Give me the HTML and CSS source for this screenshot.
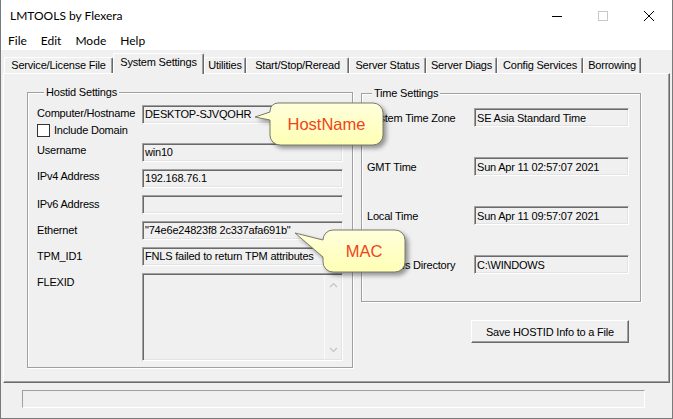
FILE: index.html
```html
<!DOCTYPE html>
<html lang="en">
<head>
<meta charset="utf-8">
<title>LMTOOLS by Flexera</title>
<link rel="stylesheet" href="styles.css">
</head>
<body>
<div class="window">
  <div class="titlebar">
    <span class="title">LMTOOLS by Flexera</span>
    <div class="winbtn"><svg width="10" height="10" viewBox="0 0 10 10"><path d="M0 5.5H10" stroke="#000" stroke-width="1"/></svg></div>
    <div class="winbtn"><svg width="10" height="10" viewBox="0 0 10 10"><rect x="0.5" y="0.5" width="9" height="9" fill="none" stroke="#c8c8c8" stroke-width="1"/></svg></div>
    <div class="winbtn"><svg width="10" height="10" viewBox="0 0 10 10"><path d="M0 0L10 10M10 0L0 10" stroke="#000" stroke-width="1"/></svg></div>
  </div>
  <div class="menubar">
    <span class="menu-item">File</span>
    <span class="menu-item">Edit</span>
    <span class="menu-item">Mode</span>
    <span class="menu-item">Help</span>
  </div>
  <div class="client">
    <div class="tabs">
      <div class="tab tab--svc">Service/License File</div>
      <div class="tab tab--sys tab--active">System Settings</div>
      <div class="tab tab--util">Utilities</div>
      <div class="tab tab--ssr">Start/Stop/Reread</div>
      <div class="tab tab--status">Server Status</div>
      <div class="tab tab--diag">Server Diags</div>
      <div class="tab tab--cfg">Config Services</div>
      <div class="tab tab--borrow">Borrowing</div>
    </div>
    <div class="panel">
      <div class="group group--host">
        <span class="group-title">Hostid Settings</span>
        <div class="hrow hrow--first">
          <span class="hlabel hlabel--host">Computer/Hostname</span>
          <div class="field">DESKTOP-SJVQOHR</div>
        </div>
        <div class="check">
          <span class="checkbox"></span>
          <span>Include Domain</span>
        </div>
        <div class="hrow hrow--user">
          <span class="hlabel hlabel--hi">Username</span>
          <div class="field">win10</div>
        </div>
        <div class="hrow">
          <span class="hlabel hlabel--hi">IPv4 Address</span>
          <div class="field">192.168.76.1</div>
        </div>
        <div class="hrow">
          <span class="hlabel">IPv6 Address</span>
          <div class="field"></div>
        </div>
        <div class="hrow">
          <span class="hlabel">Ethernet</span>
          <div class="field">"74e6e24823f8 2c337afa691b"</div>
        </div>
        <div class="hrow">
          <span class="hlabel">TPM_ID1</span>
          <div class="field">FNLS failed to return TPM attributes</div>
        </div>
        <div class="hrow">
          <span class="hlabel">FLEXID</span>
          <div class="field field--multi">
            <div class="vscroll">
              <svg width="9" height="6" viewBox="0 0 9 6"><path d="M1 5L4.5 1.5L8 5" fill="none" stroke="#c4c4c4" stroke-width="1.2"/></svg>
              <svg width="9" height="6" viewBox="0 0 9 6"><path d="M1 1L4.5 4.5L8 1" fill="none" stroke="#c4c4c4" stroke-width="1.2"/></svg>
            </div>
          </div>
        </div>
      </div>
      <div class="rightcol">
        <div class="group group--time">
          <span class="group-title group-title--time">Time Settings</span>
          <div class="trow trow--first">
            <span class="tlabel">System Time Zone</span>
            <div class="field field--time">SE Asia Standard Time</div>
          </div>
          <div class="trow">
            <span class="tlabel">GMT Time</span>
            <div class="field field--time">Sun Apr 11 02:57:07 2021</div>
          </div>
          <div class="trow">
            <span class="tlabel">Local Time</span>
            <div class="field field--time">Sun Apr 11 09:57:07 2021</div>
          </div>
          <div class="trow">
            <span class="tlabel">Windows Directory</span>
            <div class="field field--time">C:\WINDOWS</div>
          </div>
        </div>
        <button class="btn" type="button">Save HOSTID Info to a File</button>
      </div>
    </div>
    <div class="statusbar"></div>
  </div>

  <div class="callout callout--host">
    <svg class="callout-shape" width="140" height="52" viewBox="0 0 140 52">
      <defs>
        <linearGradient id="cg1" x1="0" y1="0" x2="0" y2="1">
          <stop offset="0" stop-color="#ffffdc"/>
          <stop offset="1" stop-color="#ffffb4"/>
        </linearGradient>
      </defs>
      <path d="M28,5 H123 A10,10 0 0 1 133,15 V37 A10,10 0 0 1 123,47 H30 A10,10 0 0 1 20,37 V22 L5,19 L20,14 V13 A8,8 0 0 1 28,5 Z" fill="url(#cg1)" stroke="#7a7a6a" stroke-width="1"/>
    </svg>
    <span class="callout-text callout-text--host">HostName</span>
  </div>

  <div class="callout callout--mac">
    <svg class="callout-shape" width="122" height="52" viewBox="0 0 122 52">
      <defs>
        <linearGradient id="cg2" x1="0" y1="0" x2="0" y2="1">
          <stop offset="0" stop-color="#ffffdc"/>
          <stop offset="1" stop-color="#ffffb4"/>
        </linearGradient>
      </defs>
      <path d="M43,4 H105 A10,10 0 0 1 115,14 V36 A10,10 0 0 1 105,46 H43 A10,10 0 0 1 33,36 V31 L5,7 L33,14 A10,10 0 0 1 43,4 Z" fill="url(#cg2)" stroke="#7a7a6a" stroke-width="1"/>
    </svg>
    <span class="callout-text callout-text--mac">MAC</span>
  </div>
</div>
</body>
</html>
```
FILE: styles.css
```css
* { box-sizing: border-box; }
html, body { margin: 0; padding: 0; background: #fff; }
body {
  width: 673px;
  height: 419px;
  overflow: hidden;
  font-family: "Liberation Sans", Arial, sans-serif;
  font-size: 11px;
  letter-spacing: -0.2px;
  color: #000;
}

.window {
  position: relative;
  width: 673px;
  height: 419px;
  border: 1px solid #7a7a7a;
  border-top: 0;
  display: flex;
  flex-direction: column;
  background: #fff;
}

/* title bar */
.titlebar {
  height: 31px;
  display: flex;
  align-items: center;
  font-family: "Segoe UI", Lato, "Liberation Sans", sans-serif;
  font-size: 12px;
  letter-spacing: 0;
}
.title { flex: 1; padding-left: 9px; }
.winbtn {
  width: 46px;
  height: 31px;
  display: flex;
  align-items: center;
  justify-content: center;
}
.winbtn svg { display: block; }

/* menu */
.menubar {
  height: 19px;
  display: flex;
  align-items: center;
  padding-left: 0;
  font-family: "Segoe UI", Lato, "Liberation Sans", sans-serif;
  font-size: 12px;
  letter-spacing: 0;
}
.menu-item { padding: 0 7px; }

/* client */
.client {
  flex: 1;
  background: #f0f0f0;
  padding: 3px 2px 0 2px;
  display: flex;
  flex-direction: column;
}

.tabs {
  display: flex;
  align-items: flex-end;
  height: 20px;
  padding-left: 1px;
}
.tab {
  height: 16px;
  border-top: 1px solid #fff;
  border-left: 1px solid #fff;
  border-right: 1px solid #696969;
  box-shadow: inset -1px 0 #a0a0a0;
  border-radius: 2px 2px 0 0;
  text-align: center;
  line-height: 14px;
  white-space: nowrap;
  flex: none;
}
.tab--active {
  height: 21px;
  margin-bottom: -1px;
  position: relative;
  z-index: 1;
  background: #f0f0f0;
  line-height: 17px;
}
.tab--svc { width: 109px; }
.tab--sys { width: 91px; }
.tab--util { width: 42px; }
.tab--ssr { width: 103px; }
.tab--status { width: 77px; }
.tab--diag { width: 71px; }
.tab--cfg { width: 86px; }
.tab--borrow { width: 58px; }

.panel {
  height: 310px;
  border: 1px solid;
  border-color: #fff #696969 #696969 #fff;
  box-shadow: inset -1px -1px #a0a0a0;
  display: flex;
  align-items: flex-start;
  gap: 8px;
  padding: 18px 0 0 23px;
}

/* group boxes */
.group {
  border: 1px solid #a0a0a0;
  box-shadow: inset 1px 1px #fff, 1px 1px #fff;
  display: flex;
  flex-direction: column;
  flex: none;
}
.group-title {
  align-self: flex-start;
  background: #f0f0f0;
  margin: -7px 0 0 7px;
  padding: 0 2px;
  line-height: 13px;
}
.group-title--time { margin-left: 5px; }

.group--host {
  width: 326px;
  height: 276px;
  padding: 0 9px;
}
.hrow {
  display: flex;
  margin-top: 7px;
}
.hrow--first { margin-top: 6px; }
.hrow--user { margin-top: 6px; }
.hlabel {
  width: 105px;
  flex: none;
  padding-top: 3px;
  line-height: 13px;
  white-space: nowrap;
}
.hlabel--host { padding-top: 2px; }
.hlabel--hi { padding-top: 1px; }

.field {
  width: 201px;
  height: 19px;
  flex: none;
  border: 1px solid;
  border-color: #a0a0a0 #fff #fff #a0a0a0;
  box-shadow: inset 1px 1px #696969, inset -1px -1px #e3e3e3;
  padding: 2px 0 0 2px;
  line-height: 13px;
  white-space: nowrap;
  overflow: hidden;
  background: #f0f0f0;
}
.field--multi {
  height: 88px;
  padding: 0;
  display: flex;
  justify-content: flex-end;
}
.vscroll {
  width: 17px;
  margin: 1px 1px 1px 0;
  border-left: 1px solid #fafafa;
  display: flex;
  flex-direction: column;
  justify-content: space-between;
  align-items: center;
  padding: 7px 0 6px;
}
.vscroll svg { display: block; }

.check {
  display: flex;
  align-items: center;
  gap: 4px;
  height: 13px;
  line-height: 13px;
}
.checkbox {
  width: 13px;
  height: 13px;
  border: 1px solid #333;
  background: #fff;
  flex: none;
}

/* right column */
.rightcol {
  display: flex;
  flex-direction: column;
  margin-top: 1px;
}
.group--time {
  width: 280px;
  height: 209px;
  padding: 0 11px 0 5px;
}
.trow {
  display: flex;
  margin-top: 30px;
}
.trow--first { margin-top: 8px; }
.tlabel {
  width: 107px;
  flex: none;
  padding-top: 4px;
  line-height: 13px;
  white-space: nowrap;
}
.field--time {
  width: 155px;
  padding-top: 3px;
}

.btn {
  width: 158px;
  height: 23px;
  margin: 18px 0 0 110px;
  padding: 0;
  background: #f0f0f0;
  border: 1px solid;
  border-color: #fff #696969 #696969 #fff;
  box-shadow: inset -1px -1px #a0a0a0;
  font: inherit;
  letter-spacing: inherit;
  color: #000;
}

.statusbar {
  width: 623px;
  height: 18px;
  margin: 7px 0 0 19px;
  border: 1px solid;
  border-color: #a0a0a0 #fff #fff #a0a0a0;
}

/* callouts */
.callout { position: absolute; }
.callout--host { left: 249px; top: 98px; width: 140px; height: 52px; }
.callout--mac { left: 289px; top: 226px; width: 122px; height: 52px; }
.callout-shape {
  display: block;
  overflow: visible;
  filter: drop-shadow(3px 3px 2px rgba(0, 0, 0, 0.38));
}
.callout-text {
  position: absolute;
  display: flex;
  align-items: center;
  justify-content: center;
  font-family: "Liberation Sans", Arial, sans-serif;
  font-size: 16.5px;
  letter-spacing: 0;
  color: #f2421b;
}
.callout-text--host { left: 20px; top: 5px; width: 113px; height: 42px; }
.callout-text--mac { left: 33px; top: 4px; width: 82px; height: 42px; }
```
